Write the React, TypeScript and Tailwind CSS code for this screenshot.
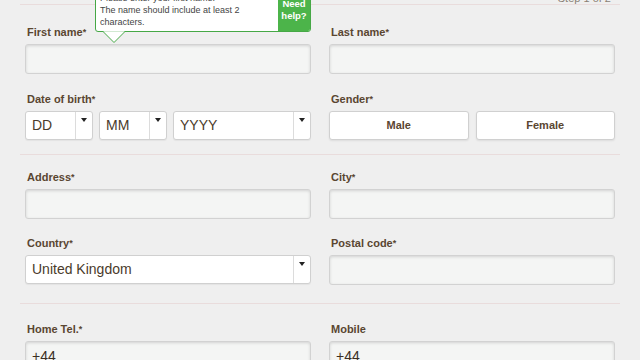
import React from "react";

const font = { fontFamily: '"Liberation Sans", Arial, sans-serif' };

function Label({ text, req = true }: { text: string; req?: boolean }) {
  return (
    <div className="h-[14px] leading-[14px] text-[11px] font-bold text-[#5a4631] mb-[5px] pl-[2px]">
      {text}
      {req && <span className="text-[9px] align-top">*</span>}
    </div>
  );
}

function TextInput({ value = "" }: { value?: string }) {
  return (
    <div className="h-[30px] rounded-[3px] border border-[#d2d2d2] bg-[#f4f5f4] shadow-[inset_0_1px_3px_rgba(0,0,0,0.14)] px-[6px] flex items-center text-[14px] text-[#3b2f24]">
      {value}
    </div>
  );
}

function Select({ value, className = "" }: { value: string; className?: string }) {
  return (
    <div className={"h-[29px] rounded-[3px] border border-[#d0d0d0] bg-white flex shadow-[0_1px_1px_rgba(0,0,0,0.05)] " + className}>
      <div className="flex-1 flex items-center pl-[6px] text-[14px] text-[#4a3b2b]">{value}</div>
      <div className="w-[17px] border-l border-[#dcdcdc] flex justify-center">
        <svg width="6" height="4" viewBox="0 0 6 4" className="mt-[6px]">
          <path d="M0 0 H6 L3 4 Z" fill="#222" />
        </svg>
      </div>
    </div>
  );
}

function GenderButton({ text }: { text: string }) {
  return (
    <div className="flex-1 h-[29px] rounded-[3px] border border-[#d0d0d0] bg-white shadow-[0_1px_2px_rgba(0,0,0,0.08)] flex items-center justify-center text-[11px] font-bold text-[#5a4631]">
      {text}
    </div>
  );
}

function Divider() {
  return <div className="h-px bg-[#e9dcdc]" />;
}

export default function App() {
  return (
    <div className="relative w-[640px] h-[360px] overflow-hidden bg-[#efefef]" style={font}>
      <div className="px-[20px]">
        <div className="h-[4px] flex justify-end items-end pr-[9px]">
          <span className="text-[11px] leading-[11px] text-[#8a7f74] whitespace-nowrap">Step 1 of 2</span>
        </div>
        <Divider />

        {/* Section 1 */}
        <div className="px-[5px] pt-[20px] pb-[14px] grid grid-cols-2 gap-x-[18px] gap-y-[18px]">
          <div>
            <Label text="First name" />
            <TextInput />
          </div>
          <div>
            <Label text="Last name" />
            <TextInput />
          </div>
          <div>
            <Label text="Date of birth" />
            <div className="flex gap-[6px]">
              <Select value="DD" className="w-[68px]" />
              <Select value="MM" className="w-[68px]" />
              <Select value="YYYY" className="flex-1" />
            </div>
          </div>
          <div>
            <Label text="Gender" />
            <div className="flex gap-[7px]">
              <GenderButton text="Male" />
              <GenderButton text="Female" />
            </div>
          </div>
        </div>
        <Divider />

        {/* Section 2 */}
        <div className="px-[5px] pt-[15px] pb-[18px] grid grid-cols-2 gap-x-[18px] gap-y-[17px]">
          <div>
            <Label text="Address" />
            <TextInput />
          </div>
          <div>
            <Label text="City" />
            <TextInput />
          </div>
          <div>
            <Label text="Country" />
            <Select value="United Kingdom" />
          </div>
          <div>
            <Label text="Postal code" />
            <TextInput />
          </div>
        </div>
        <Divider />

        {/* Section 3 */}
        <div className="px-[5px] pt-[18px] grid grid-cols-2 gap-x-[18px]">
          <div>
            <Label text="Home Tel." />
            <TextInput value="+44" />
          </div>
          <div>
            <Label text="Mobile" req={false} />
            <TextInput value="+44" />
          </div>
        </div>
      </div>

      {/* Tooltip */}
      <div className="absolute left-[95px] top-[-12px] w-[216px] h-[44px] border border-[#46a846] rounded-b-[3px] bg-white flex">
        <div className="flex-1 pl-[4px] pt-[3px] text-[9px] leading-[12px] text-[#444]">
          Please enter your first name.
          <br />
          The name should include at least 2
          <br />
          characters.
        </div>
        <div className="w-[32px] bg-[#4cb44a] rounded-br-[2px] pt-[9px] text-center text-white text-[9.5px] leading-[12px] font-bold">
          Need
          <br />
          help?
        </div>
        <svg
          width="22"
          height="13"
          viewBox="0 0 22 13"
          className="absolute left-[7px] top-[42px]"
        >
          <path d="M0 0.5 L11 11.5 L22 0.5" fill="white" stroke="#46a846" strokeWidth="1" />
          <rect x="1" y="-1" width="20" height="1.5" fill="white" />
        </svg>
      </div>
    </div>
  );
}
